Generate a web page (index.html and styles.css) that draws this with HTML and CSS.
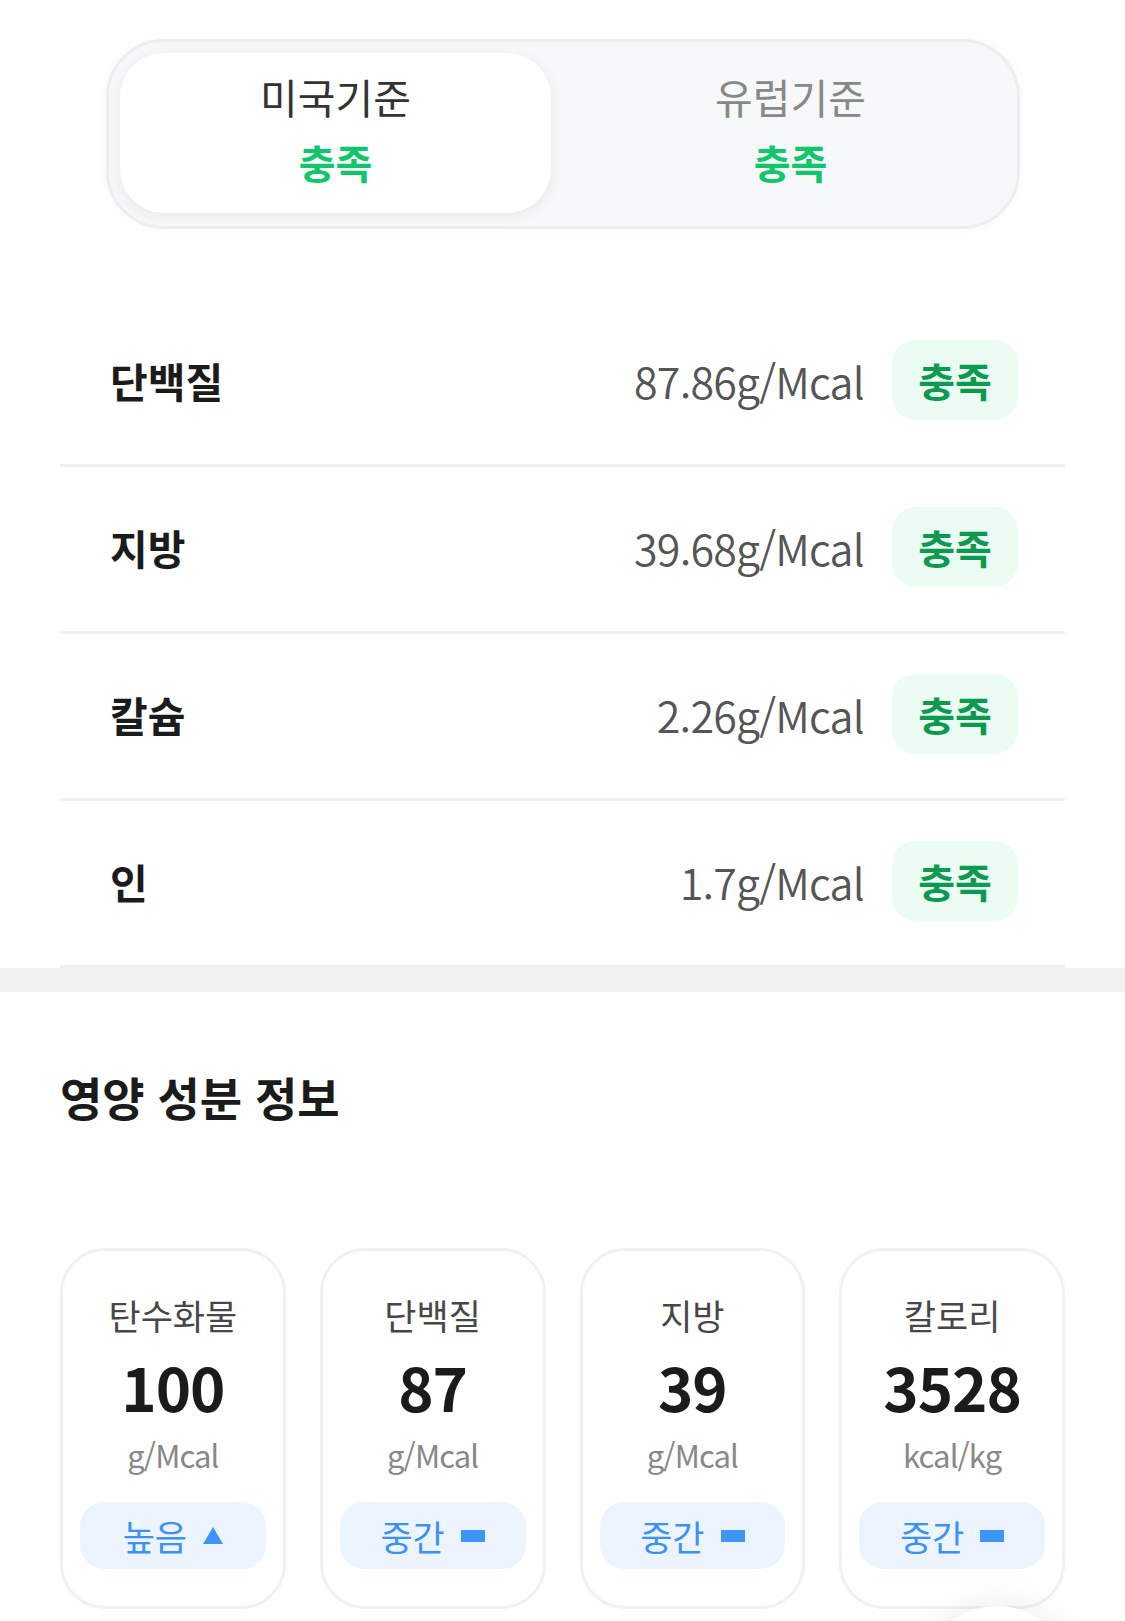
FILE: index.html
```html
<!DOCTYPE html>
<html lang="ko">
<head>
<meta charset="utf-8">
<title>영양 기준</title>
<link rel="stylesheet" href="styles.css">
</head>
<body>
<div class="page">
  <section class="standards">
    <div class="toggle">
      <div class="tab tab-active">
        <span class="tab-name">미국기준</span>
        <span class="tab-status">충족</span>
      </div>
      <div class="tab">
        <span class="tab-name">유럽기준</span>
        <span class="tab-status">충족</span>
      </div>
    </div>
    <ul class="nutrient-list">
      <li class="row"><span class="row-label">단백질</span><span class="row-value">87.86g/Mcal</span><span class="pill">충족</span></li>
      <li class="row"><span class="row-label">지방</span><span class="row-value">39.68g/Mcal</span><span class="pill">충족</span></li>
      <li class="row"><span class="row-label">칼슘</span><span class="row-value">2.26g/Mcal</span><span class="pill">충족</span></li>
      <li class="row"><span class="row-label">인</span><span class="row-value">1.7g/Mcal</span><span class="pill">충족</span></li>
    </ul>
  </section>
  <div class="band"></div>
  <section class="info">
    <h2 class="info-title">영양 성분 정보</h2>
    <div class="cards">
      <div class="card">
        <span class="card-label">탄수화물</span>
        <span class="card-number">100</span>
        <span class="card-unit">g/Mcal</span>
        <span class="level">높음<span class="icon-up"></span></span>
      </div>
      <div class="card">
        <span class="card-label">단백질</span>
        <span class="card-number">87</span>
        <span class="card-unit">g/Mcal</span>
        <span class="level">중간<span class="icon-mid"></span></span>
      </div>
      <div class="card">
        <span class="card-label">지방</span>
        <span class="card-number">39</span>
        <span class="card-unit">g/Mcal</span>
        <span class="level">중간<span class="icon-mid"></span></span>
      </div>
      <div class="card">
        <span class="card-label">칼로리</span>
        <span class="card-number">3528</span>
        <span class="card-unit">kcal/kg</span>
        <span class="level">중간<span class="icon-mid"></span></span>
      </div>
    </div>
  </section>
  <div class="fab"></div>
</div>
</body>
</html>
```

FILE: styles.css
```css
* { box-sizing: border-box; }

html, body {
  margin: 0;
  padding: 0;
  background: #ffffff;
}

body {
  font-family: "Noto Sans CJK KR", "Noto Sans", sans-serif;
  color: #1b1b1b;
}

.page {
  width: 1125px;
  min-height: 1621px;
  position: relative;
  overflow: hidden;
}

.standards {
  padding-top: 39px;
}

.toggle {
  margin: 0 105px 0 106px;
  display: grid;
  grid-template-columns: 1fr 1fr;
  gap: 24px;
  padding: 11px 11px 13px;
  background: #f7f8fa;
  border: 3px solid #eceef0;
  border-radius: 58px;
  box-shadow: 0 0 12px rgba(0, 0, 0, 0.03);
}

.tab {
  display: flex;
  flex-direction: column;
  align-items: center;
  gap: 16px;
  padding: 18px 0 26px;
  border-radius: 44px;
}

.tab-active {
  background: #ffffff;
  box-shadow: 0 3px 14px rgba(0, 0, 0, 0.07);
}

.tab-name {
  font-size: 41px;
  line-height: 50px;
  color: #888888;
}

.tab-active .tab-name {
  color: #333333;
}

.tab-status {
  font-size: 40px;
  line-height: 50px;
  font-weight: 700;
  color: #10c56a;
}

.nutrient-list {
  list-style: none;
  margin: 71px 60px 0;
  padding: 0;
}

.row {
  display: flex;
  align-items: center;
  height: 167px;
  padding: 0 47px 4px 50px;
  border-bottom: 3px solid #eff1f1;
}

.row-label {
  flex: 1;
  font-size: 41px;
  font-weight: 700;
  color: #1b1b1b;
}

.row-value {
  font-size: 43px;
  font-weight: 350;
  letter-spacing: -0.8px;
  color: #555555;
  margin-right: 28px;
}

.pill {
  display: flex;
  align-items: center;
  justify-content: center;
  width: 126px;
  height: 80px;
  border-radius: 24px;
  background: #ebfcf2;
  color: #0b9a50;
  font-size: 40px;
  font-weight: 700;
}

.band {
  height: 24px;
  background: #f1f2f2;
}

.info {
  padding: 0 60px;
}

.info-title {
  margin: 74px 0 122px;
  font-size: 46px;
  line-height: 60px;
  font-weight: 700;
  color: #1b1b1b;
}

.cards {
  display: grid;
  grid-template-columns: repeat(4, 1fr);
  gap: 34px;
}

.card {
  display: flex;
  flex-direction: column;
  align-items: center;
  padding: 42px 17px 37px;
  border: 3px solid #f1f1f1;
  border-radius: 45px;
  background: #ffffff;
}

.card-label {
  font-size: 35px;
  line-height: 44px;
  color: #474747;
}

.card-number {
  margin-top: 13px;
  font-size: 60px;
  line-height: 72px;
  font-weight: 700;
  letter-spacing: -1px;
  color: #1b1b1b;
}

.card-unit {
  margin-top: 11px;
  font-size: 31px;
  line-height: 44px;
  letter-spacing: -0.9px;
  color: #888888;
}

.level {
  margin-top: 25px;
  align-self: stretch;
  height: 67px;
  display: flex;
  align-items: center;
  justify-content: center;
  gap: 16px;
  border-radius: 24px;
  background: #ecf5ff;
  color: #3b91f7;
  font-size: 35px;
}

.icon-up {
  width: 0;
  height: 0;
  border-left: 10px solid transparent;
  border-right: 10px solid transparent;
  border-bottom: 17px solid #3d94fb;
}

.icon-mid {
  width: 24px;
  height: 12px;
  background: #3d94fb;
}

.fab {
  position: absolute;
  left: 922px;
  top: 1606px;
  width: 150px;
  height: 150px;
  border-radius: 50%;
  background: #ffffff;
  box-shadow: 0 0 40px rgba(0, 0, 0, 0.08);
}
```
